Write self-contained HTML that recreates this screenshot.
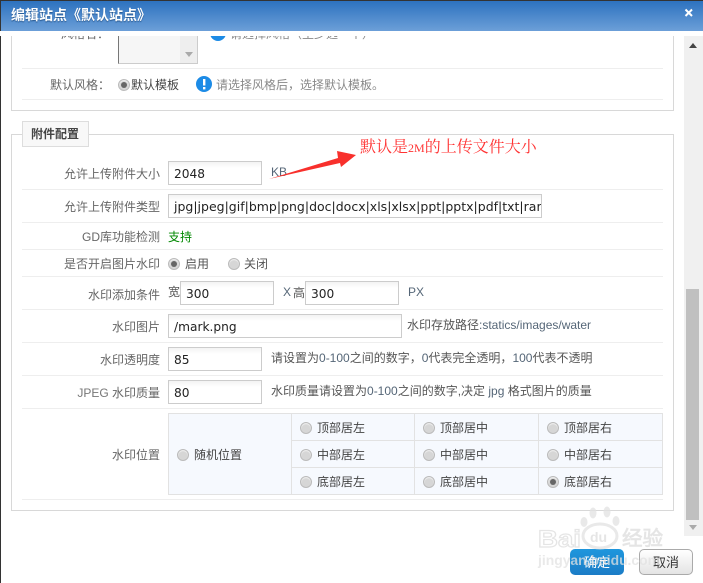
<!DOCTYPE html>
<html><head><meta charset="utf-8">
<style>
html,body{margin:0;padding:0;background:#fff}
#p{position:relative;width:703px;height:583px;overflow:hidden;background:#fff;font:12px/16px "Liberation Sans","WenQuanYi Zen Hei","Noto Sans CJK SC",sans-serif;color:#444}
#p *{box-sizing:border-box}
.a{position:absolute;white-space:nowrap}
.l{position:absolute;right:543px;white-space:nowrap;color:#666;text-align:right}
.t{position:absolute;white-space:nowrap;color:#555}
.line{position:absolute;left:22px;width:641px;height:1px;background:#eee}
.in{position:absolute;height:24px;border:1px solid #ccc;background:linear-gradient(#f3f3f3,#fff 6px);font:12.2px/24px "DejaVu Sans",sans-serif;color:#222;padding-left:5px;white-space:nowrap;overflow:hidden}
.r{position:absolute;width:12px;height:12px;border-radius:50%;background:#d6d6d6;border:1px solid #bbb;box-shadow:inset 0 1px 1px #f4f4f4}
.r.c::after{content:"";position:absolute;left:2px;top:2px;width:6px;height:6px;border-radius:50%;background:#666}
.cell{position:absolute;background:#f6f9fe;border:1px solid #e2e2e2}
.n{font-family:"Liberation Sans",sans-serif;font-size:12px;color:#567}
</style></head><body>
<div id="p">
<div class="a" style="left:0;top:0;width:703px;height:1px;background:#333"></div>
<div class="a" style="left:0;top:0;width:1px;height:583px;background:#333"></div>
<div class="a" style="left:1px;top:1px;width:702px;height:30px;background:linear-gradient(#2d72bf,#6c9fd8)"></div>
<div class="a" style="left:11px;top:7px;color:#fff;font-weight:bold;font-size:14px;line-height:17px;text-shadow:0 1px 1px #24558c">编辑站点《默认站点》</div>
<svg class="a" style="left:684px;top:8px" width="10" height="10"><path d="M1.5 1.5L8 8M8 1.5L1.5 8" stroke="#fff" stroke-width="2"/></svg>

<!-- box 1 -->
<div class="a" style="left:11px;top:36px;width:663px;height:75px;border:1px solid #d8d8d8;border-top:0"></div>
<div class="a" style="left:118px;top:36px;width:80px;height:28px;background:#f6f6f6;border:1px solid #ccc;border-top:0;border-left-color:#777"></div>
<div class="a" style="left:180px;top:36px;width:17px;height:27px;background:#eee"></div>
<div class="a" style="left:185px;top:52px;width:0;height:0;border:4px solid transparent;border-top:5px solid #aaa;border-bottom:0"></div>
<div class="a" style="left:0;top:31px;width:703px;height:5px;background:#fff"></div>
<div style="position:absolute;left:50px;top:36px;width:60px;height:6px;overflow:hidden"><span class="a" style="left:11px;top:-10px;color:#666">风格名：</span></div>
<div style="position:absolute;left:208px;top:36px;width:172px;height:6px;overflow:hidden"><span class="a" style="left:2px;top:-11px;width:16px;height:16px;border-radius:50%;background:#1c8be6"></span><span class="a" style="left:22px;top:-10px;color:#888">请选择风格（至少选一个）</span></div>
<div class="line" style="top:68px"></div>
<div class="l" style="top:77px;right:593px">默认风格：</div>
<div class="r c" style="left:118px;top:79px"></div>
<div class="t" style="left:131px;top:77px;color:#444">默认模板</div>
<svg class="a" style="left:196px;top:76px" width="16" height="16"><circle cx="8" cy="8" r="8" fill="#1c8be6"/><rect x="7" y="3" width="2.4" height="6.5" fill="#fff"/><rect x="7" y="11" width="2.4" height="2.4" fill="#fff"/></svg>
<div class="t" style="left:216px;top:77px;color:#888">请选择风格后，选择默认模板。</div>
<div class="line" style="top:99px"></div>

<!-- box 2 -->
<div class="a" style="left:11px;top:134px;width:663px;height:377px;border:1px solid #d8d8d8"></div>
<div class="a" style="left:22px;top:121px;width:67px;height:26px;border:1px solid #ddd;background:#f8f8f8;font-weight:bold;color:#444;line-height:24px;padding-left:8px">附件配置</div>

<div class="line" style="top:189px"></div>
<div class="line" style="top:222px"></div>
<div class="line" style="top:249px"></div>
<div class="line" style="top:276px"></div>
<div class="line" style="top:309px"></div>
<div class="line" style="top:342px"></div>
<div class="line" style="top:375px"></div>
<div class="line" style="top:408px"></div>
<div class="line" style="top:499px"></div>

<div class="l" style="top:166px">允许上传附件大小</div>
<div class="in" style="left:168px;top:161px;width:94px">2048</div>
<div class="t n" style="left:271px;top:164px">KB</div>

<div class="l" style="top:199px">允许上传附件类型</div>
<div class="in" style="left:168px;top:194px;width:374px;font-size:12.5px">jpg|jpeg|gif|bmp|png|doc|docx|xls|xlsx|ppt|pptx|pdf|txt|rar|zip|swf</div>

<div class="l" style="top:229px">GD库功能检测</div>
<div class="t" style="left:168px;top:229px;color:#080">支持</div>

<div class="l" style="top:256px">是否开启图片水印</div>
<div class="r c" style="left:168px;top:258px"></div>
<div class="t" style="left:185px;top:256px">启用</div>
<div class="r" style="left:228px;top:258px"></div>
<div class="t" style="left:244px;top:256px">关闭</div>

<div class="l" style="top:287px">水印添加条件</div>
<div class="t" style="left:168px;top:284px">宽</div>
<div class="in" style="left:180px;top:281px;width:94px">300</div>
<div class="t n" style="left:283px;top:284px">X</div>
<div class="t" style="left:293px;top:285px">高</div>
<div class="in" style="left:305px;top:281px;width:94px">300</div>
<div class="t n" style="left:408px;top:284px">PX</div>

<div class="l" style="top:319px">水印图片</div>
<div class="in" style="left:168px;top:314px;width:234px">/mark.png</div>
<div class="t" style="left:407px;top:317px">水印存放路径<span class="n">:statics/images/water</span></div>

<div class="l" style="top:352px">水印透明度</div>
<div class="in" style="left:168px;top:347px;width:94px">85</div>
<div class="t" style="left:271px;top:350px">请设置为<span class="n">0-100</span>之间的数字，<span class="n">0</span>代表完全透明，<span class="n">100</span>代表不透明</div>

<div class="l" style="top:385px"><span style="color:#777">JPEG</span> 水印质量</div>
<div class="in" style="left:168px;top:380px;width:94px">80</div>
<div class="t" style="left:271px;top:383px">水印质量请设置为<span class="n">0-100</span>之间的数字,决定 <span class="n">jpg</span> 格式图片的质量</div>

<div class="l" style="top:447px">水印位置</div>
<div class="cell" style="left:168px;top:413px;width:124px;height:82px"></div>
<div class="r" style="left:177px;top:449px"></div>
<div class="t" style="left:194px;top:447px;color:#444">随机位置</div>

<div class="cell" style="left:291px;top:413px;width:124px;height:28px"></div>
<div class="cell" style="left:414px;top:413px;width:125px;height:28px"></div>
<div class="cell" style="left:538px;top:413px;width:125px;height:28px"></div>
<div class="cell" style="left:291px;top:440px;width:124px;height:28px"></div>
<div class="cell" style="left:414px;top:440px;width:125px;height:28px"></div>
<div class="cell" style="left:538px;top:440px;width:125px;height:28px"></div>
<div class="cell" style="left:291px;top:467px;width:124px;height:28px"></div>
<div class="cell" style="left:414px;top:467px;width:125px;height:28px"></div>
<div class="cell" style="left:538px;top:467px;width:125px;height:28px"></div>

<div class="r" style="left:300px;top:422px"></div><div class="t" style="left:317px;top:420px;color:#444">顶部居左</div>
<div class="r" style="left:423px;top:422px"></div><div class="t" style="left:440px;top:420px;color:#444">顶部居中</div>
<div class="r" style="left:547px;top:422px"></div><div class="t" style="left:564px;top:420px;color:#444">顶部居右</div>
<div class="r" style="left:300px;top:449px"></div><div class="t" style="left:317px;top:447px;color:#444">中部居左</div>
<div class="r" style="left:423px;top:449px"></div><div class="t" style="left:440px;top:447px;color:#444">中部居中</div>
<div class="r" style="left:547px;top:449px"></div><div class="t" style="left:564px;top:447px;color:#444">中部居右</div>
<div class="r" style="left:300px;top:476px"></div><div class="t" style="left:317px;top:474px;color:#444">底部居左</div>
<div class="r" style="left:423px;top:476px"></div><div class="t" style="left:440px;top:474px;color:#444">底部居中</div>
<div class="r c" style="left:547px;top:476px"></div><div class="t" style="left:564px;top:474px;color:#444">底部居右</div>

<!-- annotation -->
<svg class="a" style="left:0;top:0" width="703" height="583"><polygon points="269,179 338,158 337,151 356,155 341,167 340,163" fill="#f8302c"/></svg>
<div class="a" style="left:360px;top:138px;color:#f33;font:16px/20px 'Liberation Serif','WenQuanYi Zen Hei','Noto Serif CJK SC',serif">默认是<span style="font-size:12px">2M</span>的上传文件大小</div>

<!-- scrollbar -->
<div class="a" style="left:684px;top:36px;width:19px;height:500px;background:#f0f0f0"></div>
<div class="a" style="left:686px;top:289px;width:13px;height:231px;background:#c0c0c0"></div>
<div class="a" style="left:689px;top:43px;width:0;height:0;border:4px solid transparent;border-bottom:5px solid #444;border-top:0"></div>
<div class="a" style="left:689px;top:525px;width:0;height:0;border:4px solid transparent;border-top:5px solid #aaa;border-bottom:0"></div>

<!-- buttons -->
<div class="a" style="left:570px;top:549px;width:54px;height:26px;border-radius:5px;background:linear-gradient(#1f97dd,#1b7cc6);color:#fff;text-align:center;line-height:27px;font-size:13px">确定</div>
<div class="a" style="left:639px;top:549px;width:54px;height:26px;border-radius:5px;border:1px solid #aaa;background:linear-gradient(#fff,#e4e4e4);color:#333;text-align:center;line-height:25px;font-size:13px">取消</div>

<!-- watermark -->
<svg class="a" style="left:536px;top:505px;opacity:.75" width="167" height="78">
<g fill="#e2e2e2"><ellipse cx="57" cy="8" rx="3.5" ry="5.5"/><ellipse cx="71" cy="7" rx="3.5" ry="5.5"/><ellipse cx="48" cy="17" rx="3.5" ry="5"/><ellipse cx="80" cy="16" rx="3.5" ry="5"/></g>
<ellipse cx="64" cy="31" rx="17" ry="12" fill="none" stroke="#e2e2e2" stroke-width="3"/>
<text x="2" y="42" font-family="Liberation Sans" font-size="24" font-weight="bold" fill="none" stroke="#ddd" stroke-width="1.2" textLength="43" lengthAdjust="spacingAndGlyphs">Bai</text>
<text x="54" y="37" font-family="Liberation Sans" font-size="14" font-weight="bold" fill="#ddd">du</text>
<text x="86" y="40" font-family="WenQuanYi Zen Hei" font-size="20" font-weight="bold" fill="#ddd" textLength="41" lengthAdjust="spacingAndGlyphs">经验</text>
<text x="2" y="60" font-family="Liberation Sans" font-size="14" font-weight="bold" fill="#e2e2e2" textLength="122" lengthAdjust="spacingAndGlyphs">jingyan.baidu.com</text>
</svg>
</div>
</body></html>
